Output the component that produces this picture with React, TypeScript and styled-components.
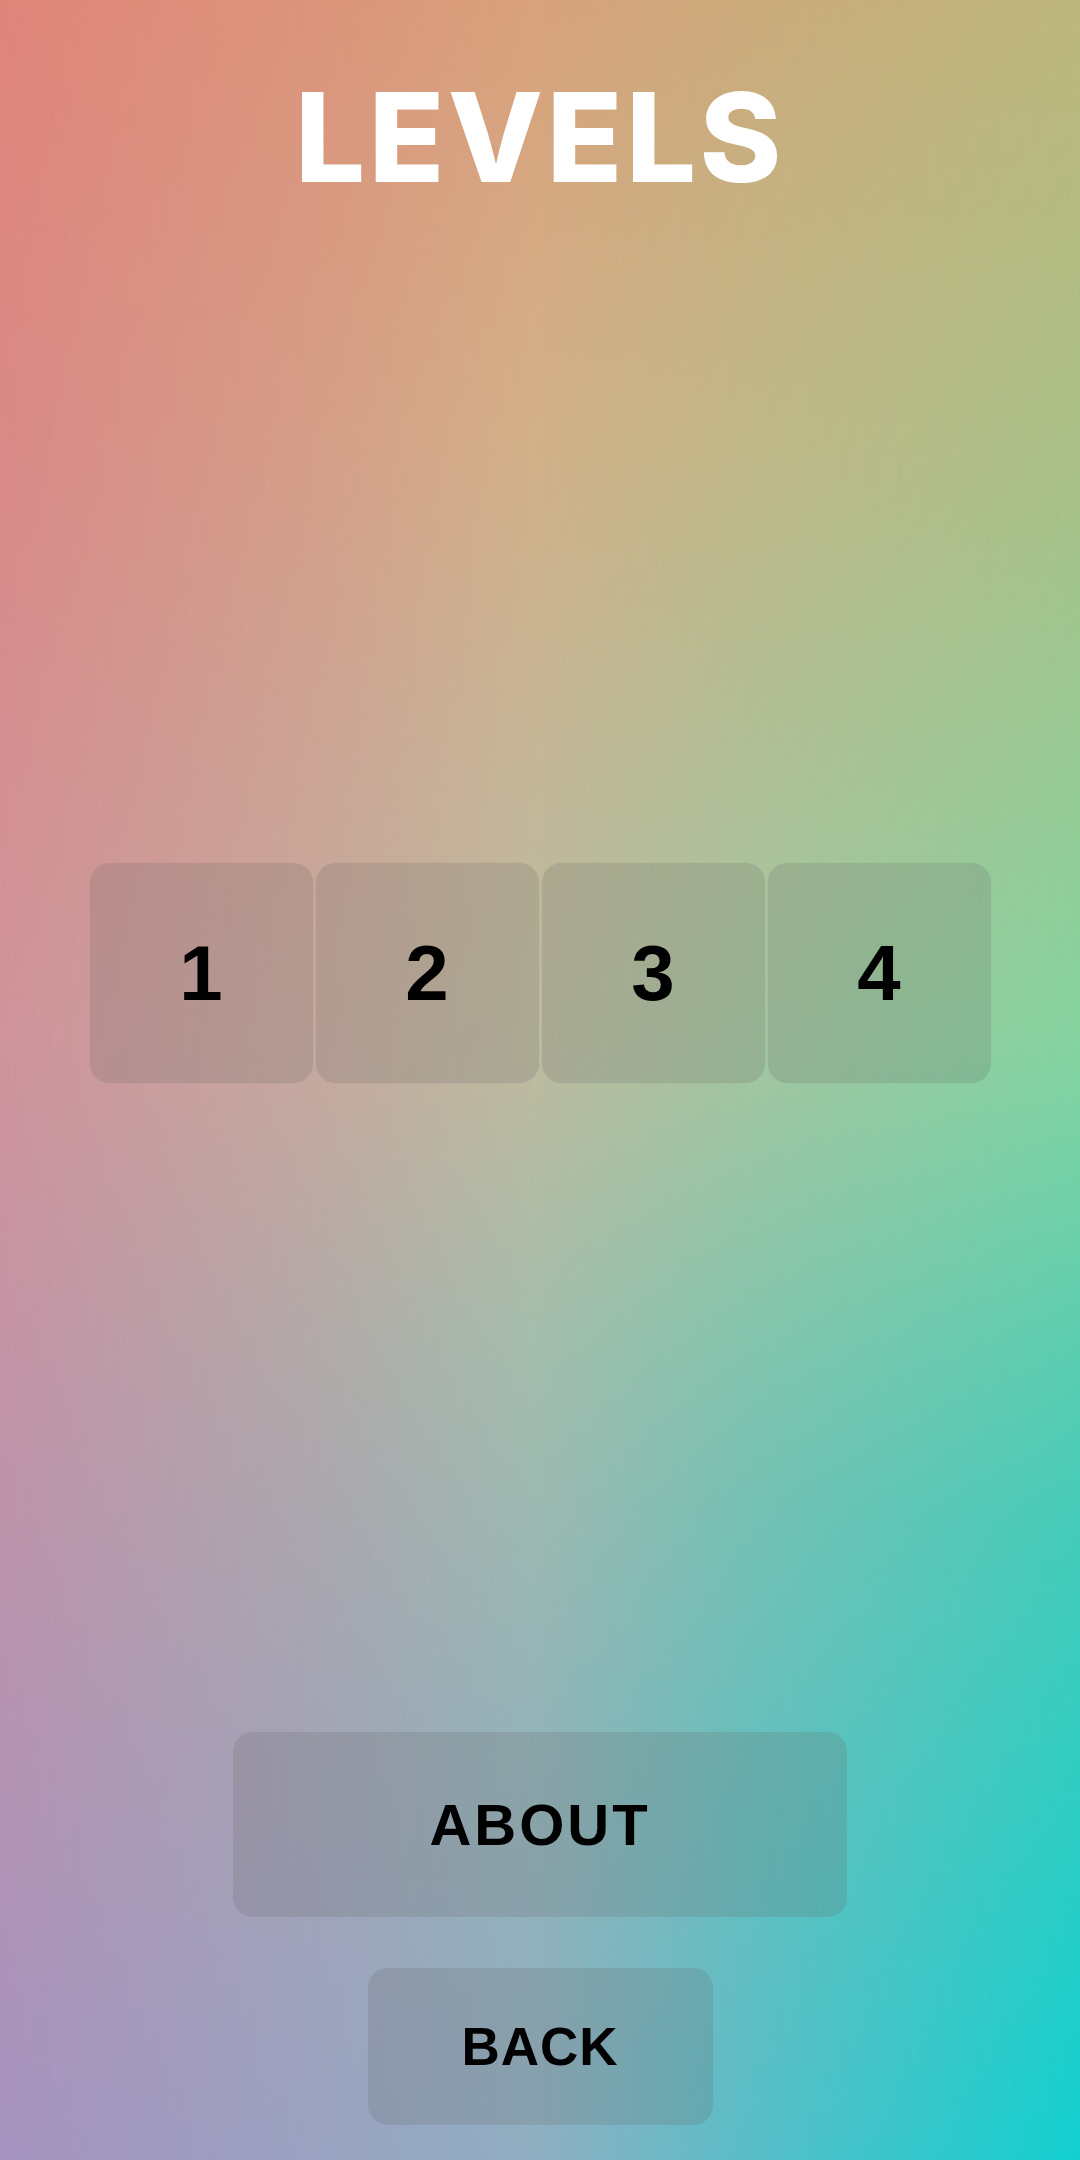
import React from "react";
import styled, { createGlobalStyle } from "styled-components";

const GlobalStyle = createGlobalStyle`
  html, body { margin: 0; padding: 0; }
  body { font-family: "Liberation Sans", Arial, sans-serif; }
`;

const Page = styled.div`
  position: relative;
  width: 1080px;
  height: 2160px;
  overflow: hidden;
  background: linear-gradient(
    to bottom,
    #e0857a 0%,
    #d98a88 22%,
    #d0949c 48%,
    #bc93ac 72%,
    #a693c0 100%
  );

  &::before {
    content: "";
    position: absolute;
    inset: 0;
    background: linear-gradient(
      to bottom,
      #d8a27c 0%,
      #d2b088 20%,
      #c2b89a 38%,
      #bbbba0 50%,
      #a3bdac 62%,
      #93b4b8 80%,
      #8fafc2 100%
    );
    -webkit-mask-image: linear-gradient(to right, transparent 0%, rgba(0,0,0,0.55) 30%, #000 50%, #000 100%);
    mask-image: linear-gradient(to right, transparent 0%, rgba(0,0,0,0.55) 30%, #000 50%, #000 100%);
  }

  &::after {
    content: "";
    position: absolute;
    inset: 0;
    background: linear-gradient(
      to bottom,
      #bcb67c 0%,
      #a8c088 22%,
      #85d3a0 48%,
      #45cbb8 70%,
      #12d0d0 100%
    );
    -webkit-mask-image: linear-gradient(to right, transparent 50%, rgba(0,0,0,0.45) 70%, #000 100%);
    mask-image: linear-gradient(to right, transparent 50%, rgba(0,0,0,0.45) 70%, #000 100%);
  }
`;

const Content = styled.main`
  position: relative;
  z-index: 1;
  display: flex;
  flex-direction: column;
  align-items: center;
  width: 100%;
  height: 100%;
`;

const Title = styled.h1`
  margin: 75px 0 0;
  font-family: Inter, "Noto Sans", sans-serif;
  font-weight: 800;
  font-size: 124px;
  line-height: 1;
  letter-spacing: 3.5px;
  color: #ffffff;
`;

const LevelRow = styled.div`
  display: flex;
  gap: 3px;
  margin-top: 664px;
`;

const LevelTile = styled.button`
  width: 223px;
  height: 220px;
  display: flex;
  align-items: center;
  justify-content: center;
  border: none;
  border-radius: 20px;
  background: rgba(100, 100, 100, 0.2);
  box-shadow: 0 0 2px rgba(0, 0, 0, 0.05);
  font-family: "Liberation Sans", Arial, sans-serif;
  font-weight: 700;
  font-size: 78px;
  color: #000;
  padding: 0;
  cursor: pointer;
`;

const MenuButton = styled.button<{ $w: number; $h: number; $size: number; $spacing: number; $mt: number }>`
  width: ${(p) => p.$w}px;
  height: ${(p) => p.$h}px;
  margin-top: ${(p) => p.$mt}px;
  display: flex;
  align-items: center;
  justify-content: center;
  border: none;
  border-radius: 20px;
  background: rgba(100, 100, 100, 0.2);
  font-family: "Liberation Sans", Arial, sans-serif;
  font-weight: 700;
  font-size: ${(p) => p.$size}px;
  letter-spacing: ${(p) => p.$spacing}px;
  color: #000;
  padding: 0;
  cursor: pointer;
`;

export default function App() {
  const levels = [1, 2, 3, 4];
  return (
    <>
      <GlobalStyle />
      <Page>
        <Content>
          <Title>LEVELS</Title>
          <LevelRow>
            {levels.map((n) => (
              <LevelTile key={n}>{n}</LevelTile>
            ))}
          </LevelRow>
          <MenuButton $w={614} $h={185} $size={58} $spacing={3} $mt={649}>
            ABOUT
          </MenuButton>
          <MenuButton $w={345} $h={157} $size={53} $spacing={1} $mt={51}>
            BACK
          </MenuButton>
        </Content>
      </Page>
    </>
  );
}
